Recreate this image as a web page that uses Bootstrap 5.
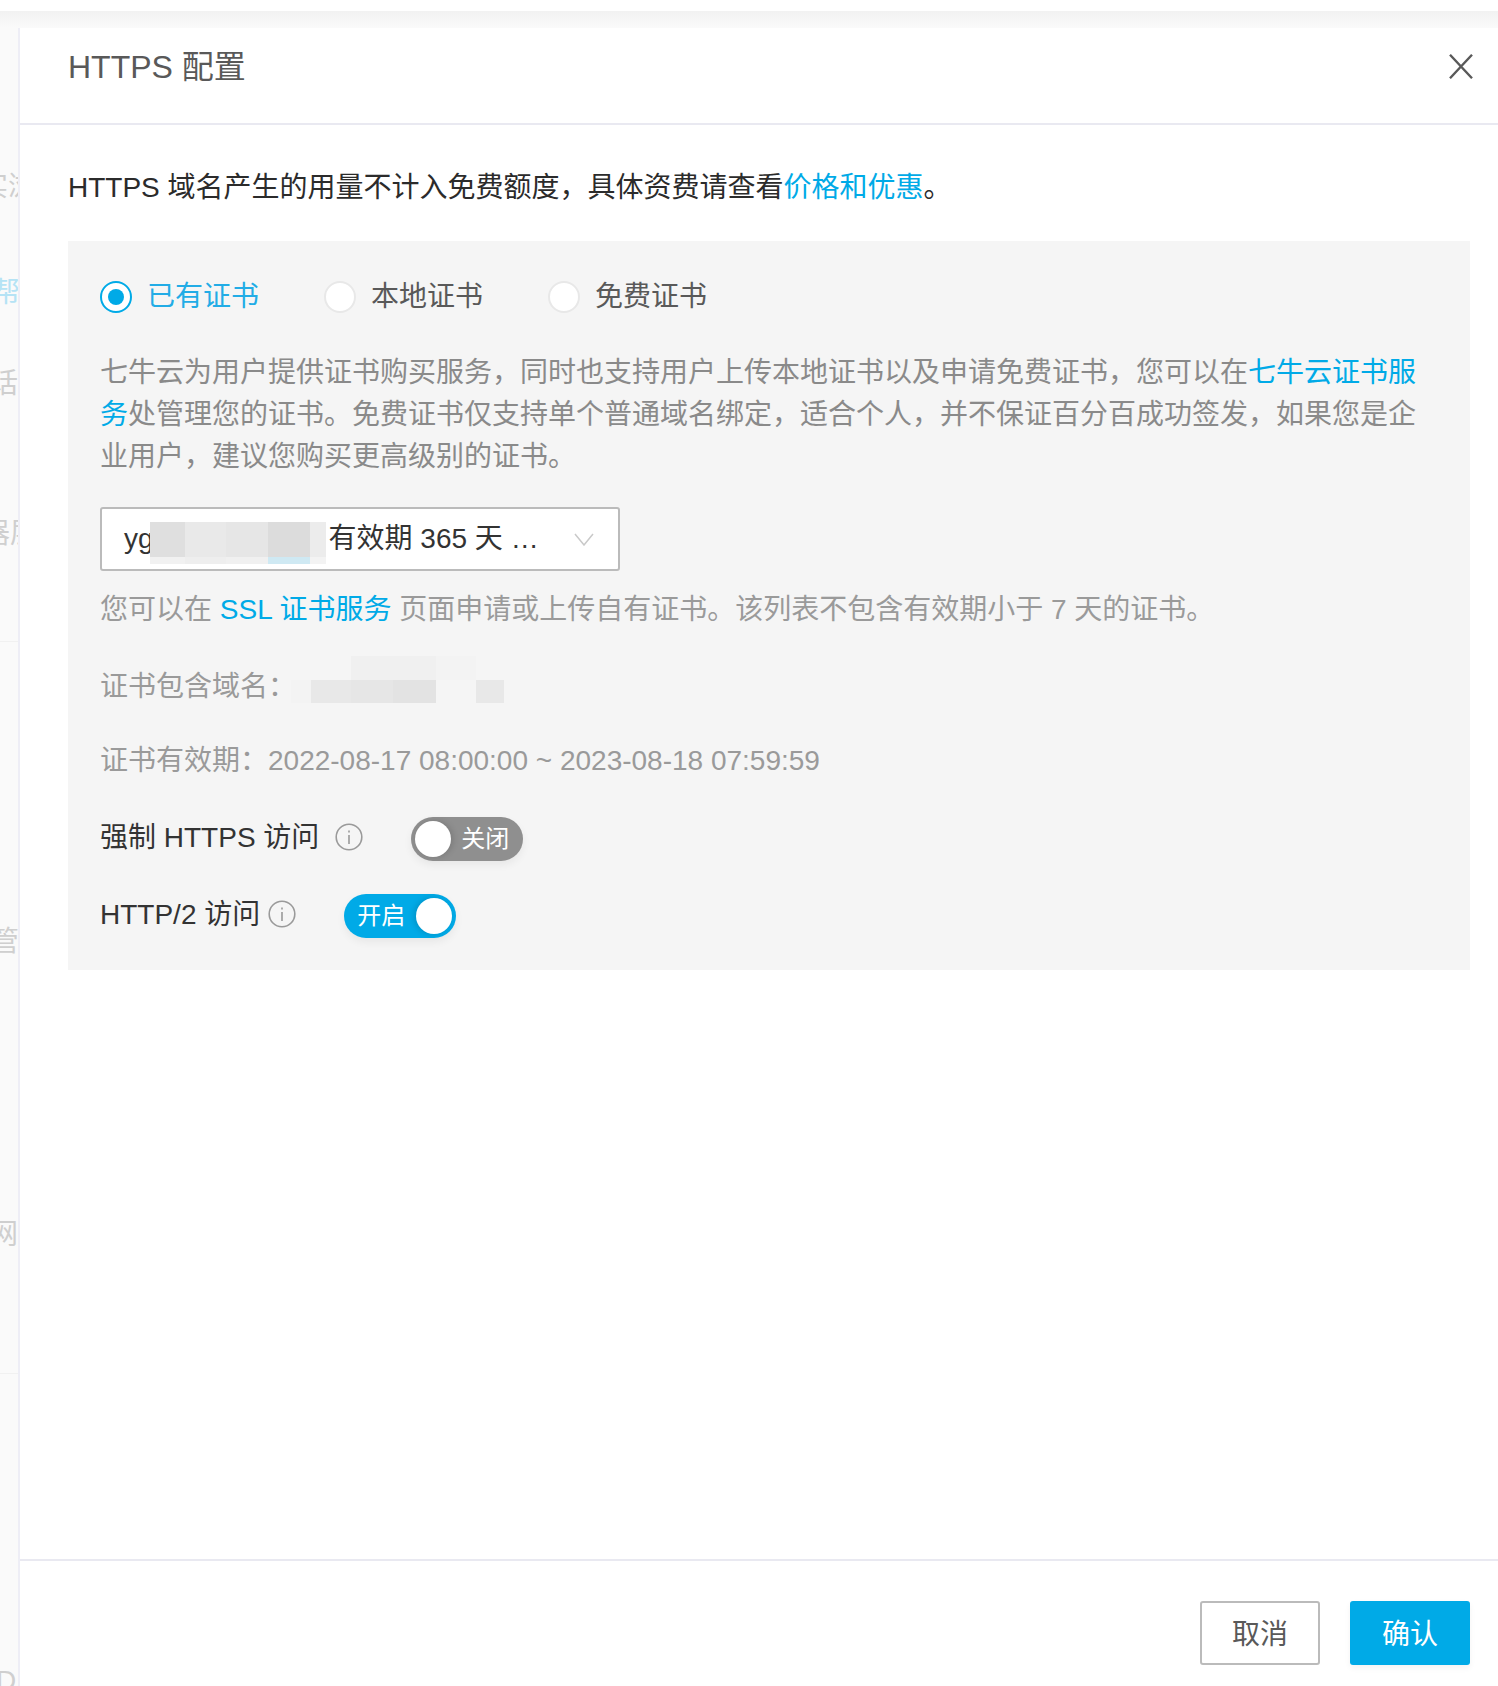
<!DOCTYPE html>
<html lang="zh">
<head>
<meta charset="utf-8">
<title>HTTPS 配置</title>
<link href="https://cdn.jsdelivr.net/npm/bootstrap@5.3.0/dist/css/bootstrap.min.css" rel="stylesheet">
<style>
html,body{height:1686px;overflow:hidden;}
body{font-family:"Liberation Sans","Noto Sans CJK SC",sans-serif;font-size:28px;background:#fff;color:#2b2b2b;}
a{color:#00aae7;text-decoration:none;}
.topband{height:28px;background:linear-gradient(#fff 0,#fff 11px,#f2f2f2 11px,#fafafa 28px);}
.stage{height:1658px;}
.sidestrip{width:20px;background:linear-gradient(#fafafa 613px,#f1f1f1 613px,#f1f1f1 614px,#fafafa 614px,#fafafa 1345px,#f1f1f1 1345px,#f1f1f1 1346px,#fafafa 1346px);border-right:2px solid #eeeef6;overflow:hidden;color:#cfcfcf;line-height:28px;}
.sidestrip div{white-space:nowrap;}
.sideblue{color:#b5e3f5;}
.s1{margin-top:145px;margin-left:-20px;}
.s2{margin-top:78px;margin-left:-8px;}
.s3{margin-top:63px;margin-left:-10px;}
.s4{margin-top:122px;margin-left:-18px;}
.s5{margin-top:380px;margin-left:-9px;}
.s6{margin-top:265px;margin-left:-10px;}
.s7{margin-top:418px;margin-left:-4px;}
.sheet{min-width:0;}
.sheethead{height:97px;border-bottom:2px solid #e9e9f1;padding:0 25px 0 48px;color:#595959;}
.sheettitle{font-size:32px;line-height:1;margin:0;font-weight:400;padding-bottom:18px;}
.closebtn{margin-bottom:19px;}
.sheetbody{padding:42px 28px 0 48px;}
.intro{line-height:42px;margin-bottom:32px;}
.graybox{background:#f5f5f5;padding:35px 32px 0;height:729px;}
.radiorow{height:42px;color:#595959;margin-bottom:34px;}
.radiogrp{gap:15px;width:224px;}
.radiodot{width:32px;height:32px;border-radius:50%;background:#fff;border:2px solid #e8e8e8;flex:none;}
.radiodot.onstate{border-color:#00aae7;padding:6px;}
.radiodot.onstate i{display:block;width:16px;height:16px;border-radius:50%;background:#00aae7;}
.onlabel{color:#22ace6;}
.para{color:#8a8a8a;line-height:42px;margin:0 0 29px;}
.certsel{width:520px;height:64px;background:#fff;border:2px solid #bbb;border-radius:3px;padding:0 24px 0 22px;color:#333;margin-bottom:18px;}
.certblur{width:176px;height:42px;flex:none;margin:8px 0 0 -4px;display:grid;grid-template-columns:35px 41px 42px 42px 16px;grid-template-rows:35px 7px;}
.certtail{margin-left:3px;white-space:nowrap;}
.hint{color:#9a9a9a;line-height:42px;height:42px;margin-bottom:35px;}
.inforow{color:#9a9a9a;line-height:42px;height:42px;margin-bottom:32px;}
.inforow.lastinfo{margin-bottom:35px;}
.domblur{width:213px;height:47px;margin:-4px 0 12px -5px;display:grid;grid-template-columns:20px 40px 42px 43px 40px 28px;grid-template-rows:24px 23px;}
.c-a{background:#dfdfdf}.c-b{background:#e9e9e9}.c-c{background:#e6e6e6}.c-d{background:#dcdcdc}.c-e{background:#ececec}
.c-f{background:#f1f1f1}.c-g{background:#eeeeee}.c-h{background:#f0f0f0}.c-i{background:#cfe9f3}.c-j{background:#f3f3f3}.c-k{background:#e8e8e8}.c-l{background:#e3e3e3}
.togrow{height:44px;color:#333;margin-bottom:33px;}
.toglabel{padding-bottom:2px;}
.inficon{flex:none;margin-bottom:5px;}
.sw0{margin-left:48px;}.ic2{margin-left:8px;}.ic1{margin-left:16px;}
.slider{width:112px;height:44px;border-radius:22px;padding:4px;color:#fff;font-size:24px;box-shadow:0 4px 8px rgba(0,0,0,.06);flex:none;}
.slider i{display:block;width:36px;height:36px;border-radius:50%;background:#fff;flex:none;}
.slider.off{background:#8f8f8f;justify-content:space-between;padding-right:14px;}
.slider.off i{box-shadow:2px 0 6px rgba(0,0,0,.15);}
.slider.on{background:#00aae7;justify-content:space-between;padding-left:13px;}
.slider.on i{box-shadow:-2px 0 6px rgba(0,0,0,.15);}
.sheetfoot{height:127px;border-top:2px solid #e9e9f1;padding:40px 28px 0 0;gap:30px;}
.footbtn{width:120px;height:64px;font-size:28px;line-height:1;border-radius:3px;padding:4px 0 0;}
.footbtn.cancel{background:#fff;border:2px solid #bbb;color:#595959;}
.footbtn.ok{background:#00aae7;border:0;color:#fff;box-shadow:0 3px 6px rgba(0,0,0,.05);}
</style>
</head>
<body>
<div class="topband"></div>
<div class="stage d-flex">
  <aside class="sidestrip flex-shrink-0">
    <div class="s1">实浏</div>
    <div class="s2 sideblue">帮</div>
    <div class="s3">话</div>
    <div class="s4">器层</div>
    <div class="s5">管</div>
    <div class="s6">网</div>
    <div class="s7">D</div>
  </aside>
  <main class="sheet flex-grow-1 d-flex flex-column">
    <header class="sheethead d-flex align-items-center justify-content-between flex-shrink-0">
      <h1 class="sheettitle">HTTPS 配置</h1>
      <svg class="closebtn" width="24" height="25" viewBox="0 0 24 25" aria-label="关闭"><path d="M1 .8 23 24.2M23 .8 1 24.2" stroke="#595959" stroke-width="2.4" fill="none"/></svg>
    </header>
    <section class="sheetbody flex-grow-1">
      <p class="intro">HTTPS 域名产生的用量不计入免费额度，具体资费请查看<a href="#">价格和优惠</a>。</p>
      <div class="graybox">
        <div class="radiorow d-flex align-items-center">
          <label class="radiogrp d-flex align-items-center"><span class="radiodot onstate"><i></i></span><span class="onlabel">已有证书</span></label>
          <label class="radiogrp d-flex align-items-center"><span class="radiodot"></span><span>本地证书</span></label>
          <label class="radiogrp d-flex align-items-center"><span class="radiodot"></span><span>免费证书</span></label>
        </div>
        <p class="para">七牛云为用户提供证书购买服务，同时也支持用户上传本地证书以及申请免费证书，您可以在<a href="#">七牛云证书服务</a>处管理您的证书。免费证书仅支持单个普通域名绑定，适合个人，并不保证百分百成功签发，如果您是企业用户，建议您购买更高级别的证书。</p>
        <div class="certsel d-flex align-items-center">
          <span>yg</span>
          <div class="certblur">
            <span class="c-a"></span><span class="c-b"></span><span class="c-c"></span><span class="c-d"></span><span class="c-e"></span>
            <span class="c-f"></span><span class="c-g"></span><span class="c-h"></span><span class="c-i"></span><span class="c-j"></span>
          </div>
          <span class="certtail">有效期 365 天 …</span>
          <svg class="ms-auto" width="20" height="13" viewBox="0 0 20 13"><path d="M1 1l9 11 9-11" fill="none" stroke="#c9c9c9" stroke-width="1.5"/></svg>
        </div>
        <div class="hint">您可以在 <a href="#">SSL 证书服务</a> 页面申请或上传自有证书。该列表不包含有效期小于 7 天的证书。</div>
        <div class="inforow d-flex align-items-center">证书包含域名：
          <div class="domblur">
            <span></span><span></span><span class="c-h"></span><span class="c-h"></span><span class="c-j"></span><span></span>
            <span class="c-j"></span><span class="c-k"></span><span class="c-c"></span><span class="c-l"></span><span></span><span class="c-k"></span>
          </div>
        </div>
        <div class="inforow lastinfo">证书有效期：2022-08-17 08:00:00 ~ 2023-08-18 07:59:59</div>
        <div class="togrow d-flex align-items-center">
          <span class="toglabel">强制 HTTPS 访问</span>
          <svg class="inficon ic1" width="28" height="28" viewBox="0 0 28 28"><circle cx="14" cy="14" r="12.8" fill="none" stroke="#9a9a9a" stroke-width="1.6"/><path d="M14 12v9M14 7.5v2" stroke="#9a9a9a" stroke-width="1.6"/></svg>
          <div class="slider off d-flex align-items-center sw0"><i></i><span>关闭</span></div>
        </div>
        <div class="togrow d-flex align-items-center">
          <span class="toglabel">HTTP/2 访问</span>
          <svg class="inficon ic2" width="28" height="28" viewBox="0 0 28 28"><circle cx="14" cy="14" r="12.8" fill="none" stroke="#9a9a9a" stroke-width="1.6"/><path d="M14 12v9M14 7.5v2" stroke="#9a9a9a" stroke-width="1.6"/></svg>
          <div class="slider on d-flex align-items-center sw0"><span>开启</span><i></i></div>
        </div>
      </div>
    </section>
    <footer class="sheetfoot d-flex justify-content-end flex-shrink-0">
      <button class="btn footbtn cancel" type="button">取消</button>
      <button class="btn footbtn ok" type="button">确认</button>
    </footer>
  </main>
</div>
<script src="https://cdn.jsdelivr.net/npm/bootstrap@5.3.0/dist/js/bootstrap.bundle.min.js"></script>
</body>
</html>
